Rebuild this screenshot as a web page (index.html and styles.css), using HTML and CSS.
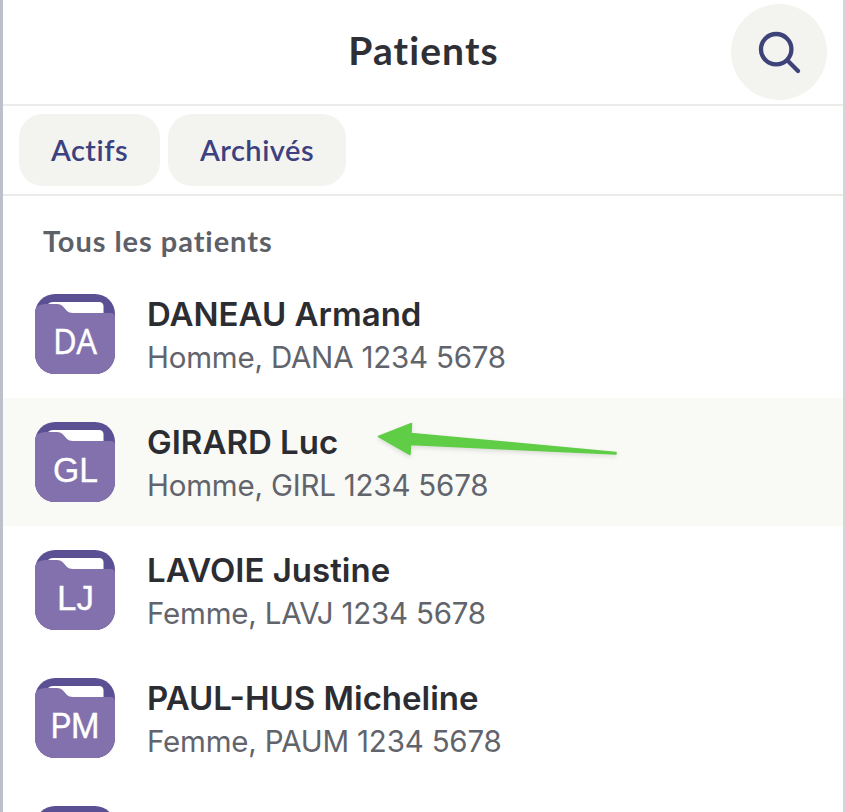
FILE: index.html
```html
<!DOCTYPE html>
<html lang="fr">
<head>
<meta charset="utf-8">
<title>Patients</title>
<link rel="stylesheet" href="styles.css">
</head>
<body>
<svg class="defs" width="0" height="0" aria-hidden="true">
  <symbol id="folder" viewBox="0 0 80 80">
    <clipPath id="tile"><rect width="80" height="80" rx="20"/></clipPath>
    <g clip-path="url(#tile)">
      <rect width="80" height="80" fill="#5b5094"/>
      <path d="M13 10Q15 8 18 8H64Q68.500 8 68.500 12.500V24H13Z" fill="#fff"/>
      <path d="M0 14Q4 10 12 10H22Q26 10 28.500 13L32 17Q34 19 38 19H76Q80 19 80 23V80H0Z" fill="#8371ae"/>
    </g>
  </symbol>
</svg>
<main class="app">
  <header class="topbar">
    <h1 class="title">Patients</h1>
    <button class="search" aria-label="Rechercher">
      <svg width="96" height="96" viewBox="0 0 96 96" fill="none" stroke="#3d4378" stroke-width="4.300" stroke-linecap="round"><circle cx="45.200" cy="45.200" r="15.200"/><path d="M56.500 56.500L67 67"/></svg>
    </button>
  </header>
  <nav class="filters">
    <button class="chip chip-active">Actifs</button>
    <button class="chip chip-archived">Archivés</button>
  </nav>
  <h2 class="section">Tous les patients</h2>
  <ul class="list">
    <li class="row">
      <svg class="avatar" viewBox="0 0 80 80"><use href="#folder"/><text class="humanist" x="18" y="60" textLength="44" lengthAdjust="spacingAndGlyphs">DA</text></svg>
      <div class="info"><div class="name">DANEAU Armand</div><div class="meta">Homme, DANA 1234 5678</div></div>
    </li>
    <li class="row selected">
      <svg class="avatar" viewBox="0 0 80 80"><use href="#folder"/><text x="18" y="60" textLength="45" lengthAdjust="spacingAndGlyphs">GL</text></svg>
      <div class="info"><div class="name">GIRARD Luc</div><div class="meta">Homme, GIRL 1234 5678</div></div>
      <svg class="arrow" width="250" height="50" viewBox="370 415 250 50"><path d="M378.500 436.500L411.500 423.500L411 433.500L616 452.500V454L410.500 444.500L410 454.500Z" fill="#5fcd46" stroke="#5fcd46" stroke-width="1.500" stroke-linejoin="round"/></svg>
    </li>
    <li class="row">
      <svg class="avatar" viewBox="0 0 80 80"><use href="#folder"/><text x="22" y="60" textLength="37" lengthAdjust="spacingAndGlyphs">LJ</text></svg>
      <div class="info"><div class="name">LAVOIE Justine</div><div class="meta">Femme, LAVJ 1234 5678</div></div>
    </li>
    <li class="row">
      <svg class="avatar" viewBox="0 0 80 80"><use href="#folder"/><text class="grotesque" x="15.500" y="60" textLength="49" lengthAdjust="spacingAndGlyphs">PM</text></svg>
      <div class="info"><div class="name">PAUL-HUS Micheline</div><div class="meta">Femme, PAUM 1234 5678</div></div>
    </li>
    <li class="row">
      <svg class="avatar" viewBox="0 0 80 80"><use href="#folder"/></svg>
    </li>
  </ul>
</main>
</body>
</html>
```
FILE: styles.css
```css
* { box-sizing: border-box; margin: 0; padding: 0; }
body { background: #fff; height: 812px; overflow: hidden; font-family: Inter, "Liberation Sans", sans-serif; }
button { border: 0; font: inherit; background: #f3f4ef; }
.defs { position: absolute; }
.app { height: 812px; overflow: hidden; border-left: 3px solid #bdbfcb; border-right: 2px solid #d4d5da; }
.topbar { height: 106px; border-bottom: 2px solid #ebebea; display: grid; grid-template-columns: 1fr auto 1fr; align-items: center; padding-right: 16px; }
.title { grid-column: 2; font: 700 39px/52px Lato, sans-serif; letter-spacing: 1.1px; color: #2f3036; white-space: nowrap; padding: 0 0 4px 17px; }
.search { justify-self: end; width: 96px; height: 96px; border-radius: 50%; }
.search svg { display: block; }
.filters { height: 90px; border-bottom: 2px solid #ebebea; padding: 8px 16px; display: flex; gap: 8px; }
.chip { height: 72px; border-radius: 24px; font: 600 29px/72px Lato, sans-serif; color: #3d4180; letter-spacing: .5px; white-space: nowrap; }
.chip-active { width: 141px; }
.chip-archived { width: 178px; }
.section { height: 74px; padding: 21px 0 0 40px; font: 700 29px/48px Lato, sans-serif; letter-spacing: .95px; color: #5e6068; }
.list { list-style: none; }
.row { height: 128px; padding: 0 32px; display: flex; align-items: center; gap: 32px; position: relative; }
.selected { background: #f9faf6; }
.avatar { width: 80px; height: 80px; flex: none; }
.avatar text { font: 35px "Liberation Sans", sans-serif; fill: #fff; stroke: #fff; stroke-width: .3px; }
.avatar .humanist { font-family: "Noto Sans", sans-serif; }
.avatar .grotesque { font-family: Roboto, sans-serif; }
.info { white-space: nowrap; padding-top: 2px; }
.name { font-size: 33px; line-height: 44px; font-weight: 600; color: #2c2d32; }
.meta { font-size: 29.500px; line-height: 42px; letter-spacing: -.2px; color: #62646c; }
.arrow { position: absolute; left: 367px; top: 17px; filter: drop-shadow(0 2px 2px rgba(0, 0, 0, .12)); }
```
